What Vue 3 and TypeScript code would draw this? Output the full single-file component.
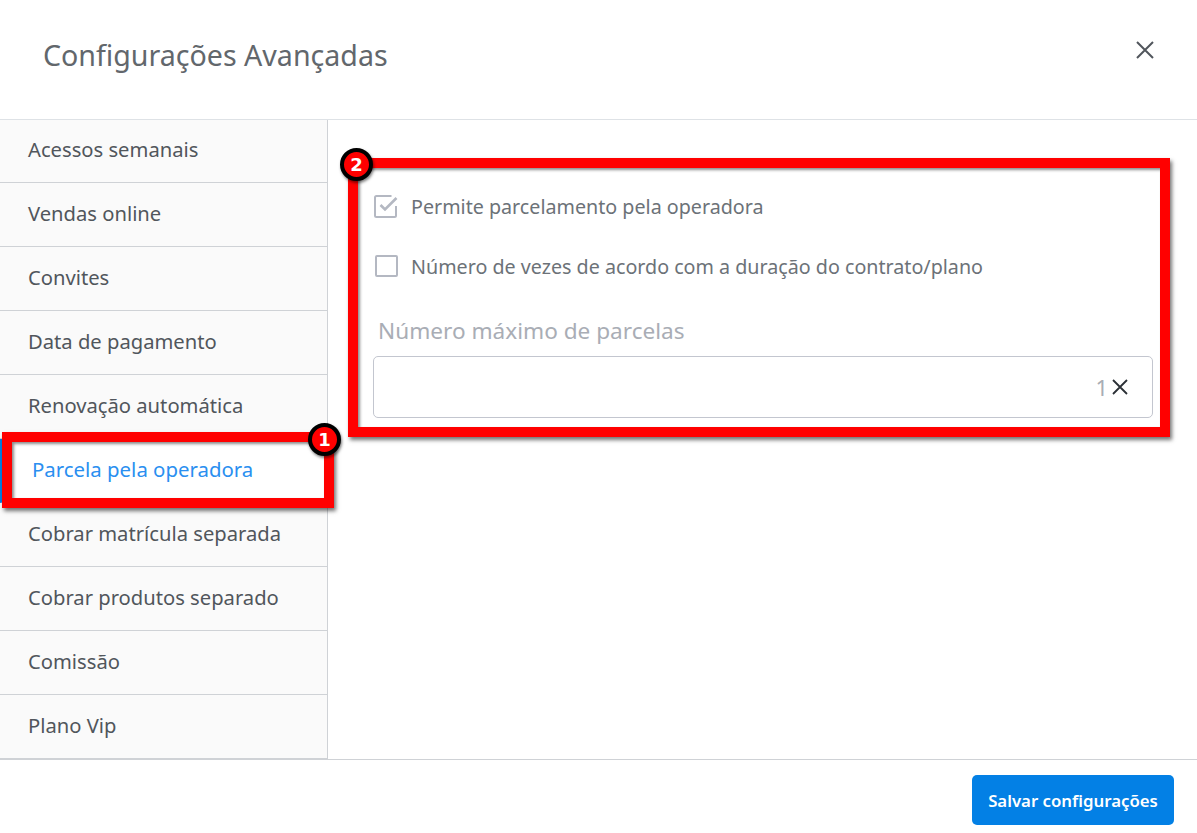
<script setup lang="ts">
const items: string[] = [
  'Acessos semanais',
  'Vendas online',
  'Convites',
  'Data de pagamento',
  'Renovação automática',
  'Parcela pela operadora',
  'Cobrar matrícula separada',
  'Cobrar produtos separado',
  'Comissão',
  'Plano Vip',
]
const activeIndex = 5
</script>

<template>
  <div class="modal">
    <header class="head">
      <h1 class="title">Configurações Avançadas</h1>
      <svg class="close" width="20" height="20" viewBox="0 0 20 20" aria-hidden="true">
        <path d="M2 2 L18 18 M18 2 L2 18" stroke="#51565c" stroke-width="2" fill="none" />
      </svg>
    </header>

    <div class="body">
      <nav class="side">
        <div
          v-for="(item, i) in items"
          :key="item"
          class="item"
          :class="{ active: i === activeIndex }"
        >{{ item }}</div>
      </nav>

      <main class="content">
        <label class="check">
          <svg class="box" width="24" height="23" viewBox="0 0 24 23" aria-hidden="true">
            <path d="M22 11 V20.5 a1.5 1.5 0 0 1 -1.5 1.5 H2.5 a1.5 1.5 0 0 1 -1.5 -1.5 V2.5 a1.5 1.5 0 0 1 1.5 -1.5 H17.5" fill="none" stroke="#b4b8c2" stroke-width="2" />
            <path d="M6.5 10 L11 14.5 L22.5 3" fill="none" stroke="#b4b8c2" stroke-width="2.6" />
          </svg>
          <span>Permite parcelamento pela operadora</span>
        </label>
        <label class="check second">
          <span class="empty"></span>
          <span>Número de vezes de acordo com a duração do contrato/plano</span>
        </label>
        <div class="field-label">Número máximo de parcelas</div>
        <div class="field">
          <span class="value">1</span>
          <svg width="16" height="16" viewBox="0 0 16 16" aria-hidden="true">
            <path d="M1 1 L15 15 M15 1 L1 15" stroke="#2b3036" stroke-width="1.8" fill="none" />
          </svg>
        </div>
      </main>
    </div>

    <footer class="foot">
      <button class="save" type="button">Salvar configurações</button>
    </footer>

    <div class="mark mark-one"><span class="badge">1</span></div>
    <div class="mark mark-two"><span class="badge">2</span></div>
  </div>
</template>

<style>
html, body { margin: 0; background: #fff; }
</style>

<style scoped>
.modal {
  position: relative;
  width: 1197px;
  height: 833px;
  overflow: hidden;
  background: #fff;
  font-family: "Noto Sans", "Open Sans", sans-serif;
  display: flex;
  flex-direction: column;
}
.head {
  height: 120px;
  box-sizing: border-box;
  border-bottom: 1px solid #dee2e6;
  display: flex;
  align-items: flex-start;
  justify-content: space-between;
  padding: 0 42px 0 43px;
}
.title {
  margin: 37px 0 0;
  font-size: 28.6px;
  line-height: 36px;
  font-weight: 400;
  color: #62676c;
}
.close { margin-top: 40px; }
.body { flex: 1; display: flex; min-height: 0; }
.side {
  width: 328px;
  box-sizing: border-box;
  border-right: 1px solid #cfd2d6;
  background: #fafafa;
}
.item {
  height: 64px;
  box-sizing: border-box;
  padding-left: 28px;
  padding-bottom: 3px;
  display: flex;
  align-items: center;
  font-size: 20.2px;
  color: #51565c;
  border-bottom: 1px solid #cfd2d6;
}
.item:first-child { height: 63px; padding-bottom: 4px; }
.item.active {
  background: #fff;
  color: #2a8ff0;
  border-left: 4px solid #0380e5;
  font-size: 20.4px;
}
.content { flex: 1; padding: 70px 44px 0 45px; }
.check {
  display: flex;
  align-items: center;
  gap: 13px;
  height: 32px;
  font-size: 19.7px;
  color: #6c7278;
}
.second { margin-top: 28px; }
.box { margin-left: 1px; flex: none; width: 24px; height: 23px; }
.empty {
  width: 19px;
  height: 18px;
  margin-left: 2px;
  flex: none;
  border: 2px solid #b4b8c2;
  border-radius: 2px;
}
.field-label {
  margin: 33px 0 0 5px;
  height: 41px;
  line-height: 32px;
  font-size: 22.6px;
  color: #a9adb5;
}
.field {
  height: 62px;
  box-sizing: border-box;
  border: 1px solid #c3c6cf;
  border-radius: 5px;
  display: flex;
  align-items: center;
  justify-content: flex-end;
  gap: 4px;
  padding-right: 24px;
}
.value { font-size: 22px; color: #a9adb5; }
.foot {
  height: 74px;
  box-sizing: border-box;
  border-top: 1px solid #cfd2d6;
  display: flex;
  justify-content: flex-end;
  align-items: flex-start;
  padding: 15px 23px 0 0;
}
.save {
  width: 202px;
  height: 50px;
  border: 0;
  border-radius: 5px;
  background: #0380e5;
  color: #fff;
  font: 600 16.8px "Noto Sans", sans-serif;
}
.mark {
  position: absolute;
  box-sizing: border-box;
  border: 10px solid #ff0000;
  box-shadow: 2px 3px 4px rgba(0, 0, 0, 0.55), inset 2px 2px 3px rgba(0, 0, 0, 0.45);
}
.mark-one { left: 2px; top: 432px; width: 332px; height: 76px; }
.mark-two { left: 348px; top: 158px; width: 822px; height: 279px; }
.badge {
  position: absolute;
  width: 25px;
  height: 25px;
  border: 4px solid #000;
  border-radius: 50%;
  background: #ff0000;
  color: #fff;
  font: 700 18px/25px "DejaVu Sans", sans-serif;
  text-align: center;
  box-shadow: 1px 2px 3px rgba(0, 0, 0, 0.5);
}
.mark-one .badge { right: -17px; top: -19px; }
.mark-two .badge { left: -18px; top: -20px; }
</style>
